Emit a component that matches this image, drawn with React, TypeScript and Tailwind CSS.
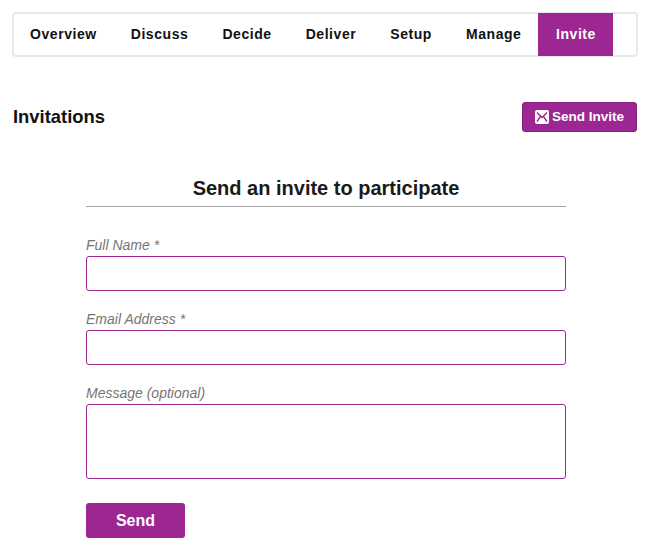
const tabs = ["Overview", "Discuss", "Decide", "Deliver", "Setup", "Manage"];

function MailIcon() {
  return (
    <svg viewBox="0 0 14 14" className="h-[14px] w-[14px] shrink-0">
      <rect x="0" y="0" width="14" height="14" rx="2" fill="#ffffff" />
      <path d="M2 2.5 7 7.5l5-5M2 11.5 5.5 6.5M12 11.5 8.5 6.5" fill="none" stroke="#9c2692" strokeWidth="1.4" />
    </svg>
  );
}

function Field({ label, tall }: { label: string; tall?: boolean }) {
  return (
    <div className="mb-[18px]">
      <label className="block h-[21px] text-[14px] italic leading-[20px] text-[#757575]">{label}</label>
      {tall ? (
        <textarea className="block h-[75px] w-full resize-none rounded-[3px] border border-[#9c2692] bg-white" />
      ) : (
        <input className="block h-[35px] w-full rounded-[3px] border border-[#9c2692] bg-white" />
      )}
    </div>
  );
}

export default function App() {
  return (
    <div className="min-h-[551px] bg-white px-3 pt-3 font-['Liberation_Sans',Arial,sans-serif] text-[#1a1a1a]">
      {/* Tabs */}
      <nav className="flex h-[45px] w-[626px] rounded-[4px] border-2 border-[#e8e8e8] bg-white">
        {tabs.map((t, i) => (
          <a
            key={t}
            className={`flex items-center px-[17px] text-[14px] font-bold tracking-[0.56px] text-[#111111] ${i === 0 ? "pl-[16px]" : ""}`}
          >
            {t}
          </a>
        ))}
        <a className="-my-px flex w-[75px] items-center justify-center bg-[#9c2692] text-[14px] font-bold tracking-[0.56px] text-white">
          Invite
        </a>
      </nav>

      {/* Header */}
      <div className="mt-[45px] flex h-[30px] w-[625px] items-center justify-between">
        <h2 className="pl-px text-[18.4px] font-bold leading-none text-[#111111]">Invitations</h2>
        <button className="flex h-[30px] w-[115px] items-center justify-center gap-[3px] rounded-[3px] border border-[#8a1f82] bg-[#9c2692] text-[13.5px] font-bold text-white">
          <MailIcon />
          Send Invite
        </button>
      </div>

      {/* Form */}
      <div className="ml-[74px] mt-[43px] w-[480px]">
        <h3 className="h-[32px] border-b border-[#a8a8a8] text-center text-[20px] font-bold leading-[26px] text-[#1a1a1a]">
          Send an invite to participate
        </h3>
        <div className="mt-[28px]">
          <Field label="Full Name *" />
          <Field label="Email Address *" />
          <Field label="Message (optional)" tall />
        </div>
        <button className="mt-[6px] h-[35px] w-[99px] rounded-[3px] bg-[#9c2692] text-[16px] font-bold text-white">
          Send
        </button>
      </div>
    </div>
  );
}
